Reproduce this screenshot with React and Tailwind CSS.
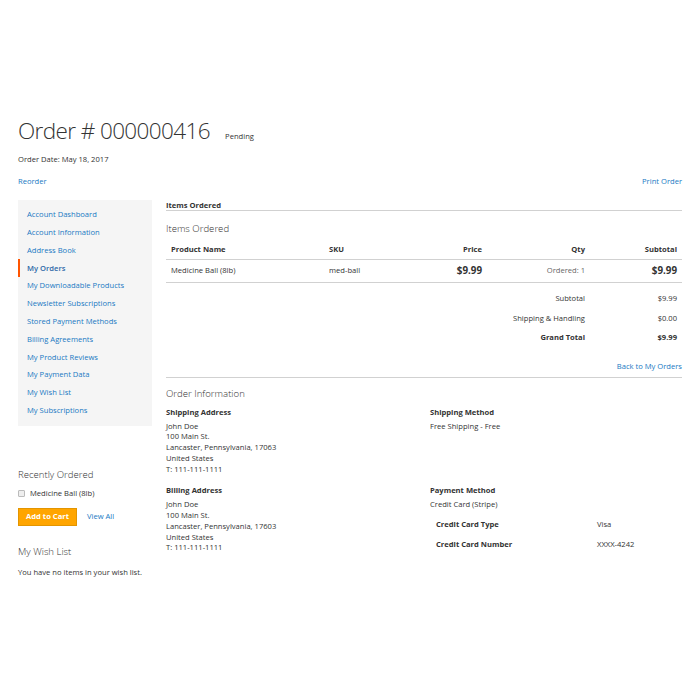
import React from "react";

const navItems = [
  "Account Dashboard",
  "Account Information",
  "Address Book",
  "My Orders",
  "My Downloadable Products",
  "Newsletter Subscriptions",
  "Stored Payment Methods",
  "Billing Agreements",
  "My Product Reviews",
  "My Payment Data",
  "My Wish List",
  "My Subscriptions",
];

const font = { fontFamily: '"Open Sans", "Liberation Sans", sans-serif' };

function Address({ title, lines }) {
  return (
    <div>
      <div className="font-bold text-[7.6px] leading-[11px] mb-[3px]">{title}</div>
      {lines.map((l) => (
        <div key={l} className="text-[7.6px] leading-[10.75px]">{l}</div>
      ))}
    </div>
  );
}

const cols = "grid grid-cols-[158px_80px_83px_103px_92px]";

export default function App() {
  return (
    <div className="min-h-[700px] w-full bg-white text-[#333]" style={font}>
      <div className="px-[18px] pt-[116px] w-[700px]">
        <div className="flex items-baseline">
          <h1 className="text-[22.5px] leading-[30px] font-light tracking-[-0.6px] text-[#333]">Order # 000000416</h1>
          <span className="ml-[15px] text-[7.6px]">Pending</span>
        </div>
        <div className="mt-[7px] text-[7.6px] leading-[12px]">Order Date: May 18, 2017</div>
        <div className="mt-[10px] flex justify-between text-[7.6px] leading-[12px] text-[#1979c3]">
          <span>Reorder</span>
          <span>Print Order</span>
        </div>

        <div className="mt-[13px] flex gap-[14px]">
          {/* sidebar */}
          <div className="w-[134px] shrink-0">
            <div className="bg-[#f5f5f5] py-[6px]">
              {navItems.map((n) =>
                n === "My Orders" ? (
                  <div
                    key={n}
                    className="h-[17.8px] flex items-center text-[7.6px] border-l-[2px] border-[#ff5501] pl-[7px] font-semibold text-[#2e6aa8]"
                  >
                    {n}
                  </div>
                ) : (
                  <div key={n} className="h-[17.8px] flex items-center text-[7.6px] pl-[9px] text-[#1979c3]">
                    {n}
                  </div>
                )
              )}
            </div>

            <div className="mt-[42px] text-[9.6px] leading-[14px] font-light">Recently Ordered</div>
            <div className="mt-[6px] h-[12px] flex items-center gap-[5px] text-[7.6px]">
              <span className="w-[7px] h-[7px] border border-[#bbb] bg-[#eee] rounded-[1px]" />
              <span>Medicine Ball (8lb)</span>
            </div>
            <div className="mt-[8px] flex items-center gap-[10px]">
              <button className="w-[59px] h-[18px] bg-[#ffa500] border border-[#e39500] text-white font-bold text-[7.6px] leading-none">
                Add to Cart
              </button>
              <span className="text-[7.6px] text-[#1979c3]">View All</span>
            </div>
            <div className="mt-[19px] text-[9.6px] leading-[14px] font-light">My Wish List</div>
            <div className="mt-[7px] text-[7.6px] leading-[12px]">You have no items in your wish list.</div>
          </div>

          {/* main */}
          <div className="w-[516px]">
            <div className="font-bold text-[7.6px] h-[11px] leading-[10px] border-b border-[#d1d1d1]">Items Ordered</div>
            <div className="mt-[11px] text-[9.6px] leading-[14px] font-light">Items Ordered</div>

            <div className={cols + " text-[7.6px] font-bold leading-[12px] pt-[7px] pb-[4px] border-b border-[#d1d1d1]"}>
              <div className="pl-[5px]">Product Name</div>
              <div className="pl-[5px]">SKU</div>
              <div className="text-right pr-[5px]">Price</div>
              <div className="text-right pr-[5px]">Qty</div>
              <div className="text-right pr-[5px]">Subtotal</div>
            </div>
            <div className={cols + " text-[7.6px] h-[23px] items-center border-b border-[#d1d1d1]"}>
              <div className="pl-[5px]">Medicine Ball (8lb)</div>
              <div className="pl-[5px]">med-ball</div>
              <div className="text-right pr-[5px] font-bold text-[9.8px]">$9.99</div>
              <div className="text-right pr-[5px] text-[#666]">Ordered: 1</div>
              <div className="text-right pr-[5px] font-bold text-[9.8px]">$9.99</div>
            </div>

            <div className="pt-[6px] text-[7.6px]">
              {[
                ["Subtotal", "$9.99", false],
                ["Shipping & Handling", "$0.00", false],
                ["Grand Total", "$9.99", true],
              ].map(([l, v, b]) => (
                <div key={l} className={"flex h-[19.5px] items-center " + (b ? "font-bold" : "")}>
                  <div className="w-[424px] text-right pr-[5px]">{l}</div>
                  <div className="w-[92px] text-right pr-[5px]">{v}</div>
                </div>
              ))}
            </div>

            <div className="mt-[12px] pb-[5px] text-right text-[7.6px] leading-[12px] text-[#1979c3] border-b border-[#d1d1d1]">
              Back to My Orders
            </div>

            <div className="mt-[9px] text-[9.6px] leading-[14px] font-light">Order Information</div>
            <div className="mt-[6px] grid grid-cols-[264px_252px] gap-y-[11px]">
              <Address
                title="Shipping Address"
                lines={["John Doe", "100 Main St.", "Lancaster, Pennsylvania, 17063", "United States", "T: 111-111-1111"]}
              />
              <Address title="Shipping Method" lines={["Free Shipping - Free"]} />
              <Address
                title="Billing Address"
                lines={["John Doe", "100 Main St.", "Lancaster, Pennsylvania, 17603", "United States", "T: 111-111-1111"]}
              />
              <div>
                <Address title="Payment Method" lines={["Credit Card (Stripe)"]} />
                <div className="mt-[5px] text-[7.6px]">
                  <div className="flex h-[19.5px] items-center">
                    <div className="w-[167px] pl-[6px] font-bold">Credit Card Type</div>
                    <div>Visa</div>
                  </div>
                  <div className="flex h-[19.5px] items-center">
                    <div className="w-[167px] pl-[6px] font-bold">Credit Card Number</div>
                    <div>XXXX-4242</div>
                  </div>
                </div>
              </div>
            </div>
          </div>
        </div>
      </div>
    </div>
  );
}
